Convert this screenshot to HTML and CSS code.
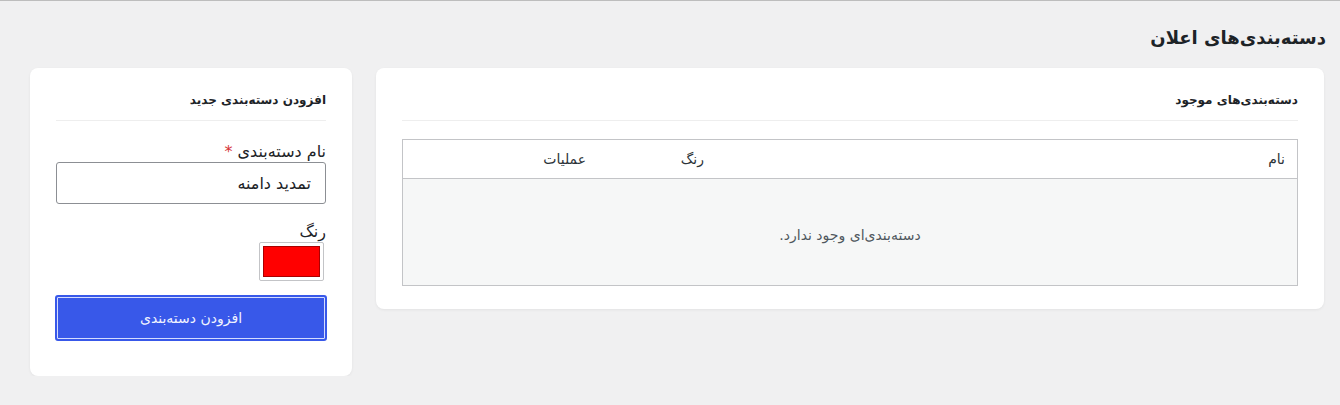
FILE: index.html
```html
<!DOCTYPE html>
<html lang="fa" dir="rtl">
<head>
  <meta charset="UTF-8" />
  <title>دسته‌بندی‌های اعلان</title>
  <link rel="stylesheet" href="styles.css">
</head>
<body>
  <div class="wrap">
    <h1>دسته‌بندی‌های اعلان</h1>

    <div class="layout">
      <div class="card list-card">
        <h2>دسته‌بندی‌های موجود</h2>
        <table class="cat-table">
          <thead>
            <tr>
              <th class="col-name">نام</th>
              <th class="col-color">رنگ</th>
              <th class="col-actions">عملیات</th>
            </tr>
          </thead>
          <tbody>
            <tr class="empty-row">
              <td colspan="3">دسته‌بندی‌ای وجود ندارد.</td>
            </tr>
          </tbody>
        </table>
      </div>

      <div class="card form-card">
        <h2>افزودن دسته‌بندی جدید</h2>
        <form>
          <label for="catName">نام دسته‌بندی <span class="req">*</span></label>
          <input type="text" id="catName" class="text-input" value="تمدید دامنه" />

          <label for="catColor" class="color-label">رنگ</label>
          <div class="color-wrap">
            <span class="color-box" id="catColor"><span class="swatch"></span></span>
          </div>

          <button type="button" class="primary-btn">افزودن دسته‌بندی</button>
        </form>
      </div>
    </div>
  </div>
</body>
</html>
```

FILE: styles.css
```css
body {
  margin: 0;
  padding: 0;
  font-family: "DejaVu Sans", sans-serif;
  background: #f0f0f1;
  color: #1d2327;
  border-top: 1px solid #bdbdbd;
}
.wrap {
  padding: 22px 14px 0 30px;
}
h1 {
  margin: 0 0 15px 0;
  font-size: 18px;
  font-weight: 700;
  line-height: 30px;
  color: #1d2327;
}
.layout {
  display: grid;
  grid-template-columns: 1fr 322px;
  gap: 24px;
  align-items: start;
  margin-left: 0;
  margin-right: 2px;
}
.card {
  background: #fff;
  border-radius: 8px;
  box-shadow: 0 1px 3px rgba(0,0,0,0.06);
  padding: 22px 26px 23px 26px;
}
.card h2 {
  margin: 0;
  font-size: 12px;
  font-weight: 700;
  line-height: 20px;
  padding-bottom: 10px;
  border-bottom: 1px solid #eeeeee;
}
.cat-table {
  width: 100%;
  margin-top: 18px;
  border-collapse: collapse;
  border: 1px solid #c3c4c7;
  font-size: 14px;
}
.cat-table th {
  text-align: right;
  font-weight: 400;
  height: 38px;
  padding: 0 12px;
  color: #2c3338;
  border-bottom: 1px solid #c3c4c7;
}
.col-name { width: 557px; }
.col-color { width: 94px; }
.empty-row td {
  background: #f6f7f7;
  text-align: center;
  color: #50575e;
  height: 107px;
  padding: 5px 0 0 0;
  box-sizing: border-box;
}
.form-card {
  padding-bottom: 35px;
}
form {
  display: flex;
  flex-direction: column;
  margin-top: 20px;
}
label {
  font-size: 16px;
  line-height: 21px;
  color: #1d2327;
}
.req {
  color: #d63638;
}
.text-input {
  height: 42px;
  box-sizing: border-box;
  margin-top: 0;
  padding: 0 14px;
  border: 1px solid #8c8f94;
  border-radius: 3px;
  font-family: "DejaVu Sans", sans-serif;
  font-size: 16px;
  color: #1d2327;
  direction: rtl;
}
.color-label {
  margin-top: 17px;
}
.color-wrap {
  display: flex;
  margin-top: 0;
}
.color-box {
  display: block;
  width: 65px;
  height: 39px;
  box-sizing: border-box;
  margin-right: 2px;
  padding: 3px;
  border: 1px solid #c3c4c7;
  border-radius: 2px;
  background: #fff;
}
.swatch {
  display: block;
  height: 100%;
  background: #ff0000;
  border: 1px solid #a00;
  box-sizing: border-box;
}
.primary-btn {
  margin-top: 14px;
  margin-right: -1px;
  margin-left: -1px;
  height: 46px;
  background: #3858e9;
  border: 2px solid #3858e9;
  box-shadow: inset 0 0 0 1px #d4dcff;
  border-radius: 3px;
  color: #f0f3ff;
  font-family: "DejaVu Sans", sans-serif;
  font-size: 14px;
  cursor: pointer;
}
```
